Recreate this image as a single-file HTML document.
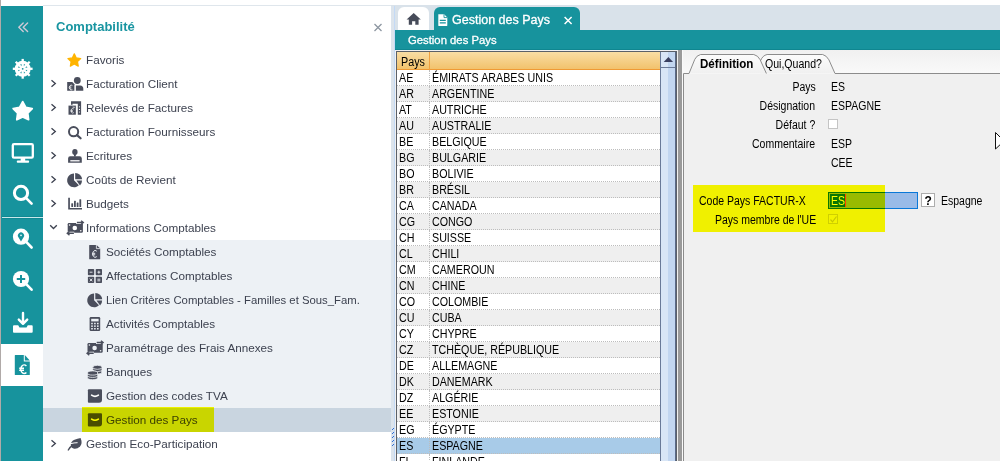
<!DOCTYPE html>
<html><head><meta charset="utf-8">
<style>
*{box-sizing:border-box;margin:0;padding:0}
html,body{width:1000px;height:461px;overflow:hidden;background:#fff;font-family:"Liberation Sans",sans-serif}
.a{position:absolute}
#strip{left:0;top:0;width:1px;height:461px;background:#b0aaa8}
#side{left:1px;top:6px;width:42px;height:455px;background:#17939d}
#sidew{left:1px;top:344px;width:42px;height:42px;background:#fff}
#sideline{left:2px;top:216px;width:41px;height:3px;background:#c8e8ea;border-top:1px solid #108892;border-bottom:1px solid #108892}
#topline{left:43px;top:5px;width:957px;height:1px;background:#dfe6ec}
#tree{left:43px;top:6px;width:348px;height:455px;background:#fff}
#subbg{left:43px;top:240px;width:348px;height:192px;background:#edf1f5}
#selbg{left:43px;top:408px;width:348px;height:24px;background:#c9d5e0}
.tt{position:absolute;font-size:11.7px;color:#3d4250;white-space:nowrap;line-height:1}
#ttl{left:56px;top:19px;font-size:13px;font-weight:bold;color:#1995a1}
/* main */
#split{left:391px;top:6px;width:4px;height:455px;background:#dce4ec}
#split2{left:394px;top:6px;width:1px;height:455px;background:#c4daf6}
#band{left:391px;top:5px;width:609px;height:25px;background:#d9e2ea}
#bar{left:395px;top:30px;width:605px;height:20px;background:#17939d;border-bottom:1px solid #0f8690}
#content{left:395px;top:50px;width:605px;height:411px;background:#f0f0f0}
#hometab{left:398px;top:7px;width:31px;height:23px;background:#fff;border-radius:6px 6px 0 0}
#doctab{left:434px;top:7px;width:146px;height:24px;background:#17939d;border-radius:6px 6px 0 0}
#tabttl{left:452px;top:14px;font-size:12.5px;color:#fff;-webkit-text-stroke:0.3px #fff}
#barttl{left:408px;top:35px;font-size:11.3px;color:#fff;-webkit-text-stroke:0.3px #fff}
#list{left:396px;top:51px;width:281px;height:410px;background:#fff;border:1px solid #5b6068;border-bottom:none}
#lhead{left:0;top:0;width:263px;height:18px;background:linear-gradient(#f9dda4,#f2c26c);border-bottom:1px solid #ef9a35}
#lhsep{left:32px;top:0;width:1px;height:18px;background:#f0a040}
#lhttl{left:3.5px;top:3.6px;transform:scaleX(.86)}
.r{position:absolute;left:0;width:263px;height:16px;background:#fff;border-bottom:1px dotted #bdbdbd}
.r.alt{background:#efefef}
.r.sel{background:#a8cbe8}
.r i,.r b{position:absolute;top:2px;font-style:normal;font-weight:normal;font-size:12.3px;transform:scaleX(.87);transform-origin:0 0;color:#000;line-height:1;white-space:nowrap}
.r i{left:2px}
.r b{left:35px}
.r::after{content:"";position:absolute;left:32px;top:0;height:16px;border-left:1px dotted #bdbdbd}
#scroll{left:263px;top:0;width:16px;height:410px;background:linear-gradient(90deg,#d9e6f6 0,#d9e6f6 50%,#c2d6f0 50%);border-left:1px solid #6a7a98;border-right:1px solid #5a6a88}
#sbtn{left:0;top:0;width:14px;height:16px;border-bottom:1px solid #6a7a98}
#vbar{left:678px;top:50px;width:4px;height:411px;background:#9a9a9a}
.lbl{position:absolute;font-size:12.5px;color:#000;line-height:1;white-space:nowrap;transform:scaleX(.84);transform-origin:0 0}
.rt{right:184.6px;text-align:right;transform-origin:100% 0}
#hl1{left:82px;top:407px;width:132px;height:25px;background:#ffff00;mix-blend-mode:multiply}
#hl2{left:693px;top:185px;width:192px;height:47px;background:#ffff00;mix-blend-mode:multiply}
</style></head><body>
<div id="strip" class="a"></div>
<div id="topline" class="a"></div>
<div id="side" class="a"></div>
<div id="sidew" class="a"></div>
<div id="sideline" class="a"></div>
<div id="tree" class="a"></div>
<div id="subbg" class="a"></div>
<div id="selbg" class="a"></div>
<div id="ttl" class="a">Comptabilité</div>
<div class="tt" style="left:86px;top:54px">Favoris</div>
<div class="tt" style="left:86px;top:78px">Facturation Client</div>
<div class="tt" style="left:86px;top:102px">Relevés de Factures</div>
<div class="tt" style="left:86px;top:126px">Facturation Fournisseurs</div>
<div class="tt" style="left:86px;top:150px">Ecritures</div>
<div class="tt" style="left:86px;top:174px">Coûts de Revient</div>
<div class="tt" style="left:86px;top:198px">Budgets</div>
<div class="tt" style="left:86px;top:222px">Informations Comptables</div>
<div class="tt" style="left:106px;top:246px">Sociétés Comptables</div>
<div class="tt" style="left:106px;top:270px">Affectations Comptables</div>
<div class="tt" style="left:106px;top:294px;transform:scaleX(.97);transform-origin:0 0">Lien Critères Comptables - Familles et Sous_Fam.</div>
<div class="tt" style="left:106px;top:318px">Activités Comptables</div>
<div class="tt" style="left:106px;top:342px">Paramétrage des Frais Annexes</div>
<div class="tt" style="left:106px;top:366px">Banques</div>
<div class="tt" style="left:106px;top:390px">Gestion des codes TVA</div>
<div class="tt" style="left:106px;top:414px">Gestion des Pays</div>
<div class="tt" style="left:86px;top:438px">Gestion Eco-Participation</div>
<div id="band" class="a"></div>
<div id="split" class="a"></div>
<div id="bar" class="a"></div>
<div id="split2" class="a"></div>
<div id="content" class="a"></div>
<div id="hometab" class="a"></div>
<div id="doctab" class="a"></div>
<div id="tabttl" class="a" style="line-height:1;white-space:nowrap">Gestion des Pays</div>
<div id="barttl" class="a" style="line-height:1;white-space:nowrap">Gestion des Pays</div>
<div id="list" class="a">
 <div id="lhead" class="a"><div id="lhsep" class="a"></div><div id="lhttl" class="lbl">Pays</div></div>
 <div class="a" style="left:0;top:0;width:263px;height:410px;overflow:hidden">
<div class="r" style="top:18px"><i>AE</i><b>ÉMIRATS ARABES UNIS</b></div>
<div class="r alt" style="top:34px"><i>AR</i><b>ARGENTINE</b></div>
<div class="r" style="top:50px"><i>AT</i><b>AUTRICHE</b></div>
<div class="r alt" style="top:66px"><i>AU</i><b>AUSTRALIE</b></div>
<div class="r" style="top:82px"><i>BE</i><b>BELGIQUE</b></div>
<div class="r alt" style="top:98px"><i>BG</i><b>BULGARIE</b></div>
<div class="r" style="top:114px"><i>BO</i><b>BOLIVIE</b></div>
<div class="r alt" style="top:130px"><i>BR</i><b>BRÉSIL</b></div>
<div class="r" style="top:146px"><i>CA</i><b>CANADA</b></div>
<div class="r alt" style="top:162px"><i>CG</i><b>CONGO</b></div>
<div class="r" style="top:178px"><i>CH</i><b>SUISSE</b></div>
<div class="r alt" style="top:194px"><i>CL</i><b>CHILI</b></div>
<div class="r" style="top:210px"><i>CM</i><b>CAMEROUN</b></div>
<div class="r alt" style="top:226px"><i>CN</i><b>CHINE</b></div>
<div class="r" style="top:242px"><i>CO</i><b>COLOMBIE</b></div>
<div class="r alt" style="top:258px"><i>CU</i><b>CUBA</b></div>
<div class="r" style="top:274px"><i>CY</i><b>CHYPRE</b></div>
<div class="r alt" style="top:290px"><i>CZ</i><b>TCHÈQUE, RÉPUBLIQUE</b></div>
<div class="r" style="top:306px"><i>DE</i><b>ALLEMAGNE</b></div>
<div class="r alt" style="top:322px"><i>DK</i><b>DANEMARK</b></div>
<div class="r" style="top:338px"><i>DZ</i><b>ALGÉRIE</b></div>
<div class="r alt" style="top:354px"><i>EE</i><b>ESTONIE</b></div>
<div class="r" style="top:370px"><i>EG</i><b>ÉGYPTE</b></div>
<div class="r alt sel" style="top:386px"><i>ES</i><b>ESPAGNE</b></div>
<div class="r" style="top:402px"><i>FI</i><b>FINLANDE</b></div>
 </div>
 <div id="scroll" class="a"><div id="sbtn" class="a"></div></div>
</div>
<div id="vbar" class="a"></div>
<div class="a" style="left:682px;top:50px;width:318px;height:24px;background:linear-gradient(#f0f0f0,#fafafa)"></div>
<div class="a" style="left:682px;top:50px;width:1px;height:411px;background:#fafafa"></div>
<div class="lbl rt" style="top:81.2px">Pays</div>
<div class="lbl" style="left:831px;top:81.2px">ES</div>
<div class="lbl rt" style="top:100.2px">Désignation</div>
<div class="lbl" style="left:831px;top:100.2px">ESPAGNE</div>
<div class="lbl rt" style="top:119.2px">Défaut ?</div>
<div class="lbl rt" style="top:138.2px">Commentaire</div>
<div class="lbl" style="left:831px;top:138.2px">ESP</div>
<div class="lbl" style="left:831px;top:157.2px">CEE</div>
<div class="lbl" style="left:699px;top:195.2px">Code Pays FACTUR-X</div>
<div class="lbl" style="left:715px;top:214.2px">Pays membre de l'UE</div>
<div class="a" style="left:828px;top:192px;width:90px;height:17px;background:#99bbe8;border:1px solid #0a78d8"></div>
<div class="a" style="left:830px;top:194px;width:15px;height:13px;background:#0a78d8"></div>
<div class="lbl" style="left:831px;top:195.2px;color:#fff">ES</div>
<div class="a" style="left:845px;top:194px;width:1px;height:13px;background:#ff4040"></div>
<div class="a" style="left:921px;top:193px;width:14px;height:14px;background:#fff;border:1px solid #adadad"></div>
<div class="lbl" style="left:924.5px;top:195px;font-weight:bold;font-size:12px;transform:none">?</div>
<div class="lbl" style="left:941px;top:195.2px">Espagne</div>
<div class="a" style="left:828px;top:119px;width:10px;height:10px;background:#fff;border:1px solid #c4c4c4"></div>
<div class="a" style="left:828px;top:214px;width:10px;height:10px;background:#f3f3f3;border:1px solid #d0d0d0"></div>
<svg class="a" style="left:0;top:0" width="1000" height="461" viewBox="0 0 1000 461">
<!-- sidebar -->
<g fill="none" stroke="#cfcad6" stroke-width="1.4" stroke-linecap="round" stroke-linejoin="round">
<path d="M23.2 23 L18.8 27.3 L23.2 31.6 M27.6 23 L23.2 27.3 L27.6 31.6"/>
</g>
<g fill="#fff" stroke="#fff">
 <circle cx="22.7" cy="68.8" r="6.4" fill="none" stroke-width="3.2"/>
 <g stroke-width="2.3">
  <line x1="22.7" y1="58.9" x2="22.7" y2="78.7"/>
  <line x1="12.8" y1="68.8" x2="32.6" y2="68.8"/>
  <line x1="15.7" y1="61.8" x2="29.7" y2="75.8"/>
  <line x1="29.7" y1="61.8" x2="15.7" y2="75.8"/>
 </g>
 <circle cx="22.7" cy="68.8" r="2.6" stroke="none"/>
</g>
<circle cx="22.7" cy="68.8" r="0.9" fill="#17939d"/>
<polygon fill="#fff" stroke="#fff" stroke-width="1.8" stroke-linejoin="round" points="22.70,101.60 25.82,107.31 32.21,108.51 27.74,113.24 28.58,119.69 22.70,116.90 16.82,119.69 17.66,113.24 13.19,108.51 19.58,107.31"/>
<rect x="12.8" y="144.1" width="20" height="13.5" rx="1.2" fill="none" stroke="#fff" stroke-width="2.3"/>
<rect x="20.7" y="158" width="4.5" height="3" fill="#fff"/>
<rect x="16.8" y="160.4" width="12.3" height="2.3" rx="0.8" fill="#fff"/>
<circle cx="21" cy="192.9" r="6.6" fill="none" stroke="#fff" stroke-width="3"/>
<line x1="26.2" y1="198.1" x2="31.6" y2="203.6" stroke="#fff" stroke-width="2.6" stroke-linecap="round"/>
<circle cx="21" cy="236.7" r="8.1" fill="#fff"/>
<line x1="26.2" y1="241.9" x2="31.6" y2="247.5" stroke="#fff" stroke-width="2.6" stroke-linecap="round"/>
<path d="M21 241.4 L18.4 237.2 A3.1 3.1 0 1 1 23.6 237.2 Z" fill="#17939d"/>
<circle cx="21" cy="235.4" r="0.8" fill="#fff"/>
<circle cx="21" cy="279" r="8.1" fill="#fff"/>
<line x1="26.2" y1="284.2" x2="31.6" y2="289.7" stroke="#fff" stroke-width="2.6" stroke-linecap="round"/>
<path d="M16.8 279 H25.2 M21 274.9 V283.1" stroke="#17939d" stroke-width="2"/>
<path d="M23 313 V323.5 M18.8 319.6 L23 323.8 L27.2 319.6" fill="none" stroke="#fff" stroke-width="2.4" stroke-linecap="round" stroke-linejoin="round"/>
<path d="M14 325.3 H18.2 L19.5 327.6 H26.5 L27.8 325.3 H31.8 Q32.7 325.3 32.7 326.3 V331.8 Q32.7 332.7 31.8 332.7 H13.9 Q13 332.7 13 331.8 V326.3 Q13 325.3 14 325.3 Z" fill="#fff"/>
<path d="M14.8 355.6 Q14.8 355.1 15.3 355.1 H23.8 V361.4 H29.8 V374.5 Q29.8 375 29.3 375 H15.3 Q14.8 375 14.8 374.5 Z" fill="#17939d"/>
<path d="M24.8 355.1 L29.8 360.4 H24.8 Z" fill="#17939d"/>
<path d="M26.4 365.9 A3.4 4.3 0 1 0 26.4 372.5 M19.2 368.2 H24 M19.2 370.3 H24" fill="none" stroke="#fff" stroke-width="1.4"/>
<!-- tree close -->
<path d="M374.5 24 L381.5 31 M381.5 24 L374.5 31" stroke="#8d96a1" stroke-width="1.3"/>
<!-- star favoris -->
<polygon fill="#ffb400" stroke="#ffb400" stroke-width="1.2" stroke-linejoin="round" points="74.30,53.8 76.3,57.9 80.7,58.55 77.5,61.65 78.25,66.1 74.30,64 70.35,66.1 71.1,61.65 67.9,58.55 72.3,57.9"/>
<!-- chevrons -->
<g fill="none" stroke="#3d4250" stroke-width="1.3" stroke-linejoin="miter">
<path d="M51.5 80.3 L55.3 83.5 L51.5 86.7"/>
<path d="M51.5 104.3 L55.3 107.5 L51.5 110.7"/>
<path d="M51.5 128.3 L55.3 131.5 L51.5 134.7"/>
<path d="M51.5 152.3 L55.3 155.5 L51.5 158.7"/>
<path d="M51.5 176.3 L55.3 179.5 L51.5 182.7"/>
<path d="M51.5 200.3 L55.3 203.5 L51.5 206.7"/>
<path d="M50.2 225.2 L53.5 228.5 L56.8 225.2"/>
<path d="M51.5 440.3 L55.3 443.5 L51.5 446.7"/>
</g>
<g fill="#4a4e5c">
<!-- facturation client -->
<circle cx="77.3" cy="80.5" r="3.4"/>
<path d="M75.8 85.4 H80.2 Q83.3 85.6 83.3 89 V90.7 H75.8 Z"/>
<path d="M67.2 82 H72.6 L74.8 84.2 V90.7 H67.2 Z"/>
</g>
<path d="M74.9 84.5 V91 M72.4 81.6 L75.2 84.4" stroke="#fff" stroke-width="0.9"/>
<path d="M72.4 85.6 A1.9 2.4 0 1 0 72.4 89.4 M69.3 87 H71.3 M69.3 88.1 H71.3" fill="none" stroke="#fff" stroke-width="0.8"/>
<g fill="#4a4e5c">
<!-- relevés -->
<path d="M71 101.3 H81.1 V114.7 H77.8 V103.7 H72.6 V104.8 H71 Z"/>
<rect x="68.5" y="105.6" width="7.6" height="9.1"/>
</g>
<path d="M76.3 105.4 V115" stroke="#fff" stroke-width="0.8"/>
<g fill="#fff"><circle cx="79.5" cy="106.8" r="0.6"/><circle cx="79.5" cy="109.4" r="0.6"/><circle cx="79.5" cy="112" r="0.6"/></g>
<path d="M73.8 109 A1.8 2.2 0 1 0 73.8 112.6 M70.9 110.3 H72.8 M70.9 111.4 H72.8" fill="none" stroke="#fff" stroke-width="0.8"/>
<path d="M73 107.3 H75 M73 106.5 V107.5" stroke="#fff" stroke-width="0.6"/>
<g fill="#4a4e5c">
<!-- search -->
<circle cx="73.6" cy="131.7" r="4.6" fill="none" stroke="#4a4e5c" stroke-width="2"/>
<line x1="77" y1="135.1" x2="80.6" y2="138.3" stroke="#4a4e5c" stroke-width="2.2" stroke-linecap="round"/>
<!-- stamp -->
<ellipse cx="74.9" cy="151.9" rx="2.7" ry="3"/>
<rect x="74" y="153.5" width="1.8" height="3"/>
<path d="M70.2 156.2 H79.6 Q81.8 156.2 81.8 158.4 V162.7 H68.1 V158.4 Q68.1 156.2 70.2 156.2 Z"/>
</g>
<rect x="70.3" y="160" width="9.3" height="1.5" fill="#fff" opacity="0.85"/>
<g fill="#4a4e5c">
<!-- pie -->
<path d="M74 173.4 V180.3 L78.9 185.2 A6.9 6.9 0 1 1 74 173.4 Z"/>
<path d="M75.2 172.9 A6.9 6.9 0 0 1 82.1 179.3 H75.2 Z"/>
<path d="M76.4 180.5 H82 A6.9 6.9 0 0 1 80 185.6 Z"/>
<!-- budgets -->
<path d="M68.2 197.7 H69.9 V207.9 H82 V209.6 H68.2 Z"/>
<rect x="71.3" y="203.3" width="1.8" height="3.7" rx="0.5"/>
<rect x="74" y="200.8" width="1.8" height="6.2" rx="0.5"/>
<rect x="76.7" y="202.6" width="1.8" height="4.4" rx="0.5"/>
<rect x="79.4" y="199.3" width="1.8" height="7.7" rx="0.5"/>
</g>
<!-- home tab icon -->
<path d="M413.7 13 L420.8 19.6 H418.6 V24.7 H415.3 V21.2 H412.1 V24.7 H408.8 V19.6 H406.6 Z" fill="#464b59"/>
<!-- doc tab icon -->
<path d="M438.3 14.3 H444.2 L447.3 17.4 V25.6 Q447.3 26 446.9 26 H438.7 Q438.3 26 438.3 25.6 Z" fill="#fff"/>
<path d="M444 14.3 V17.6 H447.3" fill="none" stroke="#17939d" stroke-width="0.9"/>
<path d="M439.8 20.3 H445.8 M439.8 22.9 H445.8" stroke="#17939d" stroke-width="1.2"/>
<!-- tab close -->
<path d="M564.6 17 L571.6 24 M571.6 17 L564.6 24" stroke="#fff" stroke-width="1.5"/>
<!-- scroll arrow -->
<path d="M663.7 62 L668.4 57 L673.1 62 Z" fill="#3a4060"/>
<!-- form tabs -->
<path d="M766.4 73.5 L760 60.5 Q758 56.5 753.8 54.5 H700.6 Q696.5 55.5 694.8 59.3 L689 73.5" fill="url(#tg)"/>
<path d="M760.6 60.7 Q762.5 55.5 767.1 54.5 H822.7 Q826.5 55.5 828.9 59.8 L835 73.5 H760 Z" fill="url(#tg)"/>
<defs><linearGradient id="tg" x1="0" y1="0" x2="0" y2="1"><stop offset="0" stop-color="#fcfcfc"/><stop offset="1" stop-color="#f0f0f0"/></linearGradient></defs>
<path d="M683.5 461 V73.5 H689 L694.8 59.3 Q696.5 55.5 700.6 54.5 H753.8 Q758 55.5 760 59.5 L766.4 73.5" fill="none" stroke="#8c8c8c" stroke-width="1"/>
<path d="M760.6 60.7 Q762.5 55.5 767.1 54.5 H822.7 Q826.5 55.5 828.9 59.8 L835 73.5 H1000" fill="none" stroke="#8c8c8c" stroke-width="1"/>
<!-- form cursor -->
<path d="M995.5 132.5 L1004 141 L995.5 149 Z" fill="#fff" stroke="#111" stroke-width="1"/>
<!-- splitter grips -->
<g fill="#2f6fd6"><rect x="393" y="428" width="1" height="1"/><rect x="392" y="429" width="1" height="1"/><rect x="393" y="432" width="1" height="1"/><rect x="392" y="433" width="1" height="1"/><rect x="393" y="436" width="1" height="1"/><rect x="392" y="437" width="1" height="1"/><rect x="393" y="440" width="1" height="1"/><rect x="392" y="441" width="1" height="1"/><rect x="393" y="444" width="1" height="1"/><rect x="392" y="445" width="1" height="1"/></g>
<!-- check -->
<path d="M830.5 219.5 L832.5 221.8 L836.5 216.5" fill="none" stroke="#c8c8c8" stroke-width="1.2"/>
<g transform="translate(66.7 221)">
<rect x="1" y="2.1" width="15.2" height="9.7" rx="1.2" fill="#4a4e5c"/>
<circle cx="8.1" cy="7" r="2.3" fill="#fff"/>
<circle cx="2.9" cy="4" r="0.8" fill="#fff"/><circle cx="14.1" cy="9.8" r="0.8" fill="#fff"/>
<path d="M9.5 1.5 H17.5 M-0.5 12.3 H7.5" stroke="#fff" stroke-width="3"/>
<path d="M10.2 1.5 H16.4 M1 12.3 H7.2" stroke="#4a4e5c" stroke-width="1.4"/>
<path d="M14.4 -0.3 L16.6 1.5 L14.4 3.3 M2.8 10.5 L0.6 12.3 L2.8 14.1" fill="none" stroke="#4a4e5c" stroke-width="1.4" stroke-linejoin="miter"/>
</g>
<g transform="translate(86.5 341)">
<rect x="1" y="2.1" width="15.2" height="9.7" rx="1.2" fill="#4a4e5c"/>
<circle cx="8.1" cy="7" r="2.3" fill="#edf1f5"/>
<circle cx="2.9" cy="4" r="0.8" fill="#edf1f5"/><circle cx="14.1" cy="9.8" r="0.8" fill="#edf1f5"/>
<path d="M9.5 1.5 H17.5 M-0.5 12.3 H7.5" stroke="#edf1f5" stroke-width="3"/>
<path d="M10.2 1.5 H16.4 M1 12.3 H7.2" stroke="#4a4e5c" stroke-width="1.4"/>
<path d="M14.4 -0.3 L16.6 1.5 L14.4 3.3 M2.8 10.5 L0.6 12.3 L2.8 14.1" fill="none" stroke="#4a4e5c" stroke-width="1.4" stroke-linejoin="miter"/>
</g>
<g fill="#4a4e5c">
<!-- societes doc euro -->
<path d="M89.2 245.4 Q89.2 244.9 89.7 244.9 H96.6 L100.2 248.5 V258.7 Q100.2 259.2 99.7 259.2 H89.7 Q89.2 259.2 89.2 258.7 Z"/>
</g>
<path d="M96.4 244.9 V248.6 H100.2" fill="none" stroke="#edf1f5" stroke-width="0.8"/>
<path d="M96.8 251.2 A2.6 3.4 0 1 0 96.8 256.6 M92.3 253.3 H95.2 M92.3 254.8 H95.2" fill="none" stroke="#edf1f5" stroke-width="1"/>
<g fill="#4a4e5c">
<rect x="87.9" y="269" width="6.3" height="6.3" rx="0.8"/><rect x="95.7" y="269" width="6.3" height="6.3" rx="0.8"/>
<rect x="87.9" y="276.8" width="6.3" height="6.3" rx="0.8"/><rect x="95.7" y="276.8" width="6.3" height="6.3" rx="0.8"/>
</g>
<path d="M89.6 272.2 H92.5 M97.4 272.2 H100.3 M98.85 270.7 V273.7 M89.8 278.6 L92.3 281.3 M92.3 278.6 L89.8 281.3 M97.4 279.2 H100.3 M97.4 280.8 H100.3" stroke="#edf1f5" stroke-width="0.9"/>
<g fill="#4a4e5c" transform="translate(20.1 120)">
<path d="M74 173.4 V180.3 L78.9 185.2 A6.9 6.9 0 1 1 74 173.4 Z"/>
<path d="M75.2 172.9 A6.9 6.9 0 0 1 82.1 179.3 H75.2 Z"/>
<path d="M76.4 180.5 H82 A6.9 6.9 0 0 1 80 185.6 Z"/>
</g>
<!-- calculator -->
<rect x="89.6" y="317" width="10.6" height="14.1" rx="1.3" fill="#4a4e5c"/>
<rect x="91.2" y="318.8" width="7.4" height="2.6" fill="#edf1f5"/>
<g fill="#edf1f5">
<rect x="91.2" y="322.8" width="1.6" height="1.5"/><rect x="94.1" y="322.8" width="1.6" height="1.5"/><rect x="97" y="322.8" width="1.6" height="1.5"/>
<rect x="91.2" y="325.4" width="1.6" height="1.5"/><rect x="94.1" y="325.4" width="1.6" height="1.5"/><rect x="97" y="325.4" width="1.6" height="1.5"/>
<rect x="91.2" y="328" width="1.6" height="1.5"/><rect x="94.1" y="328" width="1.6" height="1.5"/><rect x="97" y="328" width="1.6" height="1.5"/>
</g>
<!-- coins -->
<g fill="#4a4e5c" stroke="#edf1f5" stroke-width="0.8">
<ellipse cx="97.4" cy="372" rx="4.6" ry="2"/>
<ellipse cx="97.4" cy="369.6" rx="4.6" ry="2"/>
<ellipse cx="97.4" cy="367.3" rx="4.6" ry="2"/>
<ellipse cx="92.6" cy="377.6" rx="5.1" ry="2.1"/>
<ellipse cx="92.6" cy="375.3" rx="5.1" ry="2.1"/>
<ellipse cx="92.6" cy="373" rx="5.1" ry="2.1"/>
</g>
<!-- tva / pays -->
<path d="M88.9 389.3 H101 Q102 389.3 102 390.3 V399.7 Q102 402.7 99 402.7 H88.9 Q87.9 402.7 87.9 401.7 V390.3 Q87.9 389.3 88.9 389.3 Z" fill="#4a4e5c"/>
<path d="M91.6 395.2 Q95 397.6 98.4 395.2" fill="none" stroke="#fff" stroke-width="1.6" stroke-linecap="round"/>
<path d="M88.9 413.2 H101 Q102 413.2 102 414.2 V423.6 Q102 426.6 99 426.6 H88.9 Q87.9 426.6 87.9 425.6 V414.2 Q87.9 413.2 88.9 413.2 Z" fill="#4a4e5c"/>
<path d="M91.6 419.1 Q95 421.5 98.4 419.1" fill="none" stroke="#fff" stroke-width="1.6" stroke-linecap="round"/>
<!-- leaf -->
<path d="M80.6 438 Q82.8 443.5 80 446.5 Q77 449.3 73.5 448.5 Q71.5 448 71 446.5 L70.8 444.8 Q71 441.2 74.5 439.8 Q77.5 438.8 80.6 438 Z" fill="#4a4e5c"/>
<path d="M70.6 443.7 Q74 442.7 77.6 442.7" fill="none" stroke="#fff" stroke-width="1"/>
<path d="M72.8 445.2 Q70.2 446.8 68.3 450" fill="none" stroke="#4a4e5c" stroke-width="1.4" stroke-linecap="round"/>

</svg>
<div class="lbl" style="left:700px;top:57.6px;font-weight:bold;font-size:12px;transform:scaleX(.965)">Définition</div>
<div class="lbl" style="left:765px;top:57.6px;font-size:12px;transform:scaleX(.88)">Qui,Quand?</div>
<div id="hl1" class="a"></div>
<div id="hl2" class="a"></div>
</body></html>
